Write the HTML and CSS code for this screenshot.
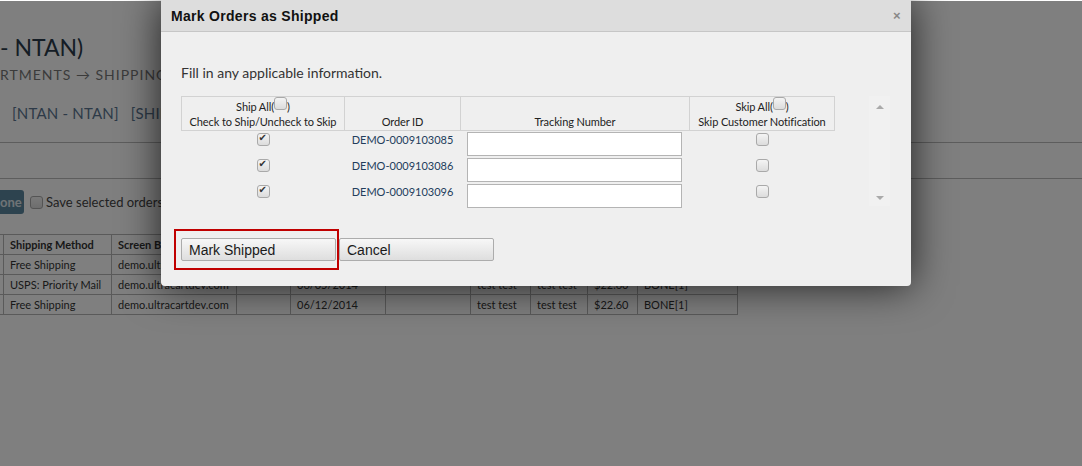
FILE: index.html
```html
<!DOCTYPE html>
<html lang="en">
<head>
  <meta charset="UTF-8">
  <title>Mark Orders as Shipped</title>
  <link rel="stylesheet" href="styles.css">
</head>
<body>
  <!-- Page behind the modal -->
  <div class="page">
    <h1 class="page-title">- NTAN)</h1>
    <div class="crumbs">RTMENTS → SHIPPING</div>
    <div class="subnav"><a>[NTAN - NTAN]</a><a>[SHIPPING]</a></div>
    <div class="band"></div>
    <div class="toolbar">
      <button class="btn-done">one</button>
      <span class="cb"></span>
      <span class="save-label">Save selected orders during this session</span>
    </div>
    <table class="orders">
      <colgroup>
        <col style="width:43px"><col style="width:108px"><col style="width:125px"><col style="width:54px">
        <col style="width:95px"><col style="width:85px"><col style="width:60px"><col style="width:57px">
        <col style="width:50px"><col style="width:100px">
      </colgroup>
      <tr>
        <th></th>
        <th>Shipping Method</th>
        <th>Screen Branding</th>
        <th></th>
        <th>Order Date</th>
        <th></th>
        <th>Bill To</th>
        <th>Ship To</th>
        <th>Total</th>
        <th>Items</th>
      </tr>
      <tr>
        <td></td><td>Free Shipping</td><td>demo.ultracartdev.com</td><td></td><td>06/05/2014</td><td></td>
        <td>test test</td><td>test test</td><td>$22.60</td><td>BONE[1]</td>
      </tr>
      <tr>
        <td></td><td>USPS: Priority Mail</td><td>demo.ultracartdev.com</td><td></td><td>06/05/2014</td><td></td>
        <td>test test</td><td>test test</td><td>$22.60</td><td>BONE[1]</td>
      </tr>
      <tr>
        <td></td><td>Free Shipping</td><td>demo.ultracartdev.com</td><td></td><td>06/12/2014</td><td></td>
        <td>test test</td><td>test test</td><td>$22.60</td><td>BONE[1]</td>
      </tr>
    </table>
  </div>

  <div class="overlay"></div>

  <!-- Modal -->
  <div class="dialog">
    <div class="dialog-title">
      <span>Mark Orders as Shipped</span>
      <span class="close">×</span>
    </div>
    <div class="dialog-body">
      <p class="intro">Fill in any applicable information.</p>
      <div class="scroll-wrap">
        <div class="scroll-area">
          <table class="ship-table">
            <tr>
              <th class="s0">Ship All(<span class="cb"></span>)<br>Check to Ship/Uncheck to Skip</th>
              <th class="s1">Order ID</th>
              <th class="s2">Tracking Number</th>
              <th class="s3">Skip All(<span class="cb"></span>)<br>Skip Customer Notification</th>
            </tr>
            <tr>
              <td><span class="cb checked"></span></td>
              <td class="oid">DEMO-0009103085</td>
              <td><input type="text"></td>
              <td><span class="cb"></span></td>
            </tr>
            <tr>
              <td><span class="cb checked"></span></td>
              <td class="oid">DEMO-0009103086</td>
              <td><input type="text"></td>
              <td><span class="cb"></span></td>
            </tr>
            <tr>
              <td><span class="cb checked"></span></td>
              <td class="oid">DEMO-0009103096</td>
              <td><input type="text"></td>
              <td><span class="cb"></span></td>
            </tr>
          </table>
        </div>
        <div class="scrollbar">
          <span class="arrow-up"></span>
          <span class="arrow-down"></span>
        </div>
      </div>
      <div class="actions">
        <div class="highlight"><button class="btn">Mark Shipped</button></div>
        <button class="btn">Cancel</button>
      </div>
    </div>
  </div>
</body>
</html>
```

FILE: styles.css
```css
body { margin: 0; background: #fff; font-family: Lato, "Open Sans", sans-serif; color: #333; overflow: hidden; height: 466px; }

.page { padding-top: 31px; }
.page-title { margin: 0; font-size: 23px; font-weight: normal; line-height: 32px; color: #2a3a4a; }
.crumbs { margin-top: 2px; font-size: 14px; letter-spacing: 1px; color: #777; line-height: 20px; }
.subnav { margin-top: 18px; font-size: 15px; line-height: 20px; color: #5a7590; letter-spacing: 0.2px; }
.subnav a { margin-left: 12px; }
.band { margin-top: 19px; height: 35px; border-top: 1px solid #bbb; border-bottom: 1px solid #bbb; }
.toolbar { display: flex; align-items: center; margin-top: 11px; height: 24px; font-size: 13px; }
.btn-done { height: 24px; width: 24px; padding: 0; border: 0; border-radius: 0 3px 3px 0; background: #5b869e; color: #dfe7ec; font: bold 13px Lato, sans-serif; text-align: left; }
.toolbar .cb { margin-left: 6px; }
.save-label { margin-left: 3px; color: #444; }

.orders { margin: 20px 0 0 -40px; width: 777px; table-layout: fixed; border-collapse: collapse; font-size: 11px; }
.orders th, .orders td { border: 1px solid #b5b5b5; height: 19px; padding: 0 6px; text-align: left; white-space: nowrap; overflow: hidden; color: #333; }
.orders th { font-weight: bold; }

.overlay { position: absolute; left: 0; top: 1px; right: 0; bottom: 0; background: rgba(0, 0, 0, 0.5); }

.dialog { position: absolute; left: 161px; top: 0; width: 750px; height: 286px; background: #efefef; border-radius: 0 0 4px 4px; box-shadow: 0 0 40px rgba(0, 0, 0, 0.75); }
.dialog-title { display: flex; justify-content: space-between; align-items: center; height: 31px; padding: 0 10px; background: #dddddd; border-bottom: 1px solid #c6c6c6; font: bold 14px "Liberation Sans", Arial, sans-serif; letter-spacing: 0.3px; color: #111; }
.close { font: bold 13px "Liberation Sans", sans-serif; color: #888; }

.dialog-body { padding: 0 20px; }
.intro { margin: 32px 0 14px; font-size: 14px; line-height: 18px; color: #333; }

.scroll-wrap { display: flex; height: 113px; }
.scroll-area { width: 688px; }
.ship-table { border-collapse: collapse; width: 654px; font-size: 11px; letter-spacing: -0.1px; }
.ship-table th { border: 1px solid #d2d2d2; font-weight: normal; vertical-align: bottom; padding: 2px 2px 1px; line-height: 15px; color: #222; }
.ship-table .s0 { width: 158px; }
.ship-table .s1 { width: 111px; }
.ship-table .s2 { width: 224px; }
.ship-table td { height: 26px; padding: 0; text-align: center; vertical-align: top; }
.ship-table td .cb { margin-top: 1px; }
.ship-table th .cb { vertical-align: top; margin-top: -2px; }
.oid { color: #233d5c; line-height: 18px; letter-spacing: 0; }
.ship-table input { display: block; box-sizing: border-box; width: 215px; height: 24px; margin: 1px 0 0 6px; border: 1px solid #b4b4b4; background: #fff; }

.cb { display: inline-block; box-sizing: border-box; width: 13px; height: 13px; border: 1px solid #a9a9a9; border-radius: 3px; background: linear-gradient(#f4f4f4, #dcdcdc); vertical-align: middle; position: relative; }
.cb.checked::after { content: "✔"; position: absolute; left: 1px; top: -2px; font: bold 10px "DejaVu Sans", sans-serif; color: #333; }

.scrollbar { display: flex; flex-direction: column; justify-content: space-between; align-items: center; width: 21px; height: 110px; background: #f1f1f1; box-sizing: border-box; padding: 9px 0 6px; }
.arrow-up { width: 0; height: 0; border-left: 4px solid transparent; border-right: 4px solid transparent; border-bottom: 4px solid #aaa; }
.arrow-down { width: 0; height: 0; border-left: 4px solid transparent; border-right: 4px solid transparent; border-top: 4px solid #aaa; }

.actions { display: flex; align-items: center; margin: 20px 0 0 -7px; }
.highlight { border: 2px solid #c00000; padding: 7px 1px 7px 5px; }
.btn { display: block; width: 155px; height: 23px; padding: 0 0 0 7px; border: 1px solid #acacac; border-radius: 2px; background: linear-gradient(#f7f7f7, #dedede); font: 14px "Liberation Sans", Arial, sans-serif; color: #1a1a1a; text-align: left; }
```
